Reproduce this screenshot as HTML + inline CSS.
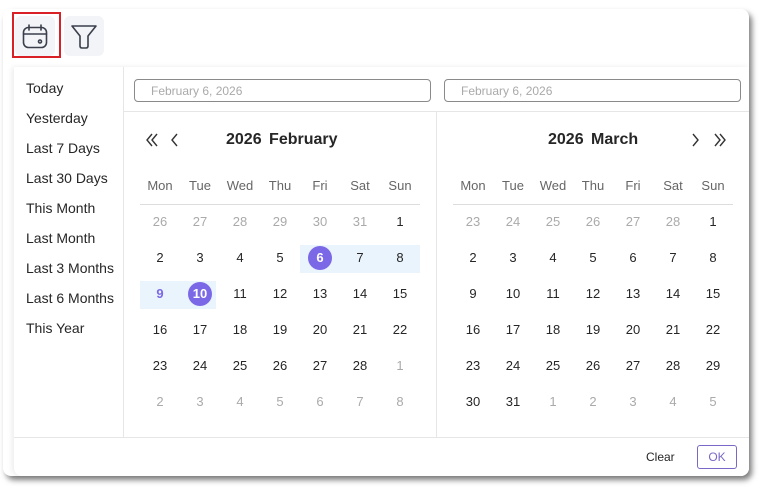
<!DOCTYPE html>
<html><head><meta charset="utf-8"><style>
*{margin:0;padding:0;box-sizing:border-box}
body{width:770px;height:497px;background:#fff;font-family:"Liberation Sans",Roboto,sans-serif;position:relative;overflow:hidden;color:#262626}
.card{position:absolute;left:3px;top:9px;width:746px;height:467px;background:#fff;border-radius:8px;box-shadow:3px 4px 6px rgba(0,0,0,.5)}
.btn{position:absolute;top:16px;width:40px;height:40px;border-radius:6px;background:#f3f4f7}
.pop{position:absolute;left:14px;top:67px;width:735px;height:409px;background:#fff;border-radius:0 0 8px 8px;box-shadow:-2px 0 6px rgba(0,0,0,.08)}
.list{position:absolute;left:0;top:0;width:110px;height:370px;border-right:1px solid #e6e6e6}
.list div{height:30px;line-height:30px;padding-left:12px;font-size:14px;color:#262626}
.inp{position:absolute;top:12px;height:23px;border:1px solid #8a8a8a;border-radius:4px;font-size:12px;color:#aaa;padding-left:16px;line-height:22px}
.hl{position:absolute;height:1px;background:#e6e6e6}
.vl{position:absolute;width:1px;background:#e6e6e6}
.title{position:absolute;top:64px;font-size:16px;font-weight:bold;color:#262626;word-spacing:3px}
.g{position:absolute;display:grid;grid-template-columns:repeat(7,40px);grid-auto-rows:36px;font-size:13px;text-align:center}
.g span{height:36px;line-height:36px;display:block}
.wk{position:absolute;display:grid;grid-template-columns:repeat(7,40px);font-size:13px;color:#666;text-align:center}
.o{color:#aaa}
.g .sel{position:relative;color:#fff;font-weight:bold;z-index:1}
.sel:before{content:"";position:absolute;left:8px;top:6px;width:24px;height:24px;border-radius:50%;background:#7b68e6;z-index:-1}
.rng{position:absolute;background:#eaf4fd}
.nav{position:absolute;top:66px}
</style></head><body>
<div class="card"></div>
<div class="btn" style="left:15px;background:#f3f4f7"></div>
<div style="position:absolute;left:12px;top:12px;width:49px;height:46px;border:2px solid #d92027"></div>
<svg style="position:absolute;left:22px;top:24px" width="26" height="26" viewBox="0 0 26 26" fill="none" stroke="#3a3f4b" stroke-width="1.6" stroke-linecap="round"><rect x="1.5" y="3.5" width="23" height="20" rx="5"/><path d="M7 1v5M19 1v5M1.5 10h23"/><circle cx="18" cy="17.5" r="1.5"/></svg>
<div class="btn" style="left:64px"></div>
<svg style="position:absolute;left:70px;top:24px" width="28" height="26" viewBox="0 0 28 26" fill="none" stroke="#3a3f4b" stroke-width="1.6" stroke-linejoin="round"><path d="M2 2h24l-8 10v10q0 2-2 2h-4q-2 0-2-2V12z"/></svg>
<div class="pop">
<div class="list"><div style="margin-top:6px">Today</div><div>Yesterday</div><div>Last 7 Days</div><div>Last 30 Days</div><div>This Month</div><div>Last Month</div><div>Last 3 Months</div><div>Last 6 Months</div><div>This Year</div></div>
<div class="inp" style="left:120px;width:297px">February 6, 2026</div>
<div class="inp" style="left:430px;width:297px">February 6, 2026</div>
<div class="hl" style="left:110px;top:44px;width:625px"></div>
<div class="vl" style="left:422px;top:44px;height:326px"></div>
<div class="hl" style="left:0;top:370px;width:735px"></div>
<svg class="nav" style="left:132px" width="40" height="14" viewBox="0 0 40 14" fill="none" stroke="#333" stroke-width="1.4"><path d="M6 1L1 7l5 6M11 1L6 7l5 6M31 1l-5 6 5 6"/></svg>
<div class="title" style="left:212px">2026 February</div>
<div class="title" style="left:534px">2026 March</div>
<svg class="nav" style="left:678px" width="34" height="14" viewBox="0 0 34 14" fill="none" stroke="#333" stroke-width="1.4"><path d="M1 1l5 6-5 6M23 1l5 6-5 6M28 1l5 6-5 6"/></svg>
<div class="wk" style="left:126px;top:111px"><span>Mon</span><span>Tue</span><span>Wed</span><span>Thu</span><span>Fri</span><span>Sat</span><span>Sun</span></div>
<div class="wk" style="left:439px;top:111px"><span>Mon</span><span>Tue</span><span>Wed</span><span>Thu</span><span>Fri</span><span>Sat</span><span>Sun</span></div>
<div class="hl" style="left:126px;top:137px;width:280px;background:#ddd"></div>
<div class="hl" style="left:439px;top:137px;width:280px;background:#ddd"></div>
<div class="rng" style="left:286px;top:178px;width:120px;height:28px"></div>
<div class="rng" style="left:126px;top:214px;width:76px;height:28px"></div>
<div class="g" style="left:126px;top:137px">
<span class="o">26</span><span class="o">27</span><span class="o">28</span><span class="o">29</span><span class="o">30</span><span class="o">31</span><span>1</span>
<span>2</span><span>3</span><span>4</span><span>5</span><span class="sel">6</span><span>7</span><span>8</span>
<span style="color:#7b68e6;font-weight:bold">9</span><span class="sel">10</span><span>11</span><span>12</span><span>13</span><span>14</span><span>15</span>
<span>16</span><span>17</span><span>18</span><span>19</span><span>20</span><span>21</span><span>22</span>
<span>23</span><span>24</span><span>25</span><span>26</span><span>27</span><span>28</span><span class="o">1</span>
<span class="o">2</span><span class="o">3</span><span class="o">4</span><span class="o">5</span><span class="o">6</span><span class="o">7</span><span class="o">8</span>
</div>
<div class="g" style="left:439px;top:137px">
<span class="o">23</span><span class="o">24</span><span class="o">25</span><span class="o">26</span><span class="o">27</span><span class="o">28</span><span>1</span>
<span>2</span><span>3</span><span>4</span><span>5</span><span>6</span><span>7</span><span>8</span>
<span>9</span><span>10</span><span>11</span><span>12</span><span>13</span><span>14</span><span>15</span>
<span>16</span><span>17</span><span>18</span><span>19</span><span>20</span><span>21</span><span>22</span>
<span>23</span><span>24</span><span>25</span><span>26</span><span>27</span><span>28</span><span>29</span>
<span>30</span><span>31</span><span class="o">1</span><span class="o">2</span><span class="o">3</span><span class="o">4</span><span class="o">5</span>
</div>
<div style="position:absolute;left:632px;top:383px;font-size:12px;color:#262626">Clear</div>
<div style="position:absolute;left:683px;top:378px;width:40px;height:24px;border:1px solid #7b68c6;border-radius:3px;color:#7b68c6;font-size:12px;text-align:center;line-height:22px">OK</div>
</div>
</body></html>
